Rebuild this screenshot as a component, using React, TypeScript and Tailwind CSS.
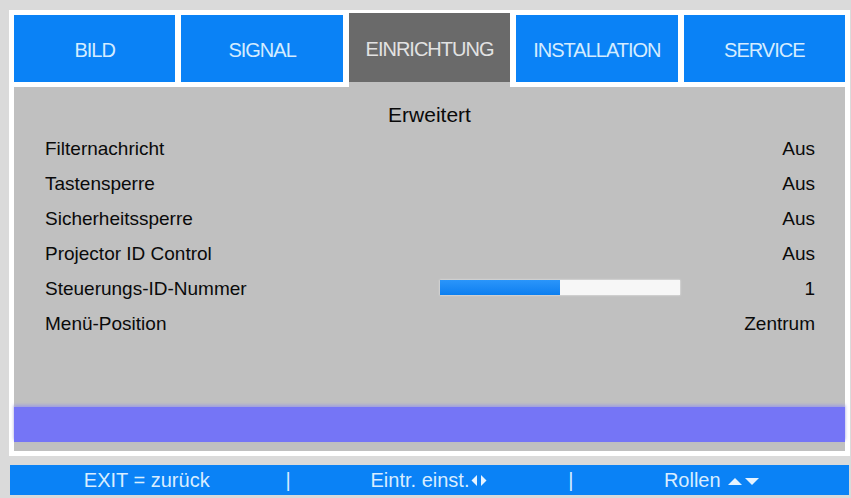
import React from "react";

const tabs = ["BILD", "SIGNAL", "EINRICHTUNG", "INSTALLATION", "SERVICE"];
const activeTab = 2;

const rows: { label: string; value: string; slider?: number }[] = [
  { label: "Filternachricht", value: "Aus" },
  { label: "Tastensperre", value: "Aus" },
  { label: "Sicherheitssperre", value: "Aus" },
  { label: "Projector ID Control", value: "Aus" },
  { label: "Steuerungs-ID-Nummer", value: "1", slider: 50 },
  { label: "Menü-Position", value: "Zentrum" },
];

const Tab: React.FC<{ title: string; active: boolean }> = ({ title, active }) => {
  return <div className="flex flex-col">
    <div
      className={`flex items-center justify-center pt-[3px] text-[20px] tracking-[-1px] ${active ? "bg-[#6a6a6a] text-[#e2e2e2] -mt-[2px] h-[69px]" : "h-[67px] bg-[#0a82f6] text-[#d4ecff]"}`}
    >
      {title}
    </div>
    <div className={`h-[5px] ${active ? "bg-[#c0c0c0]" : "bg-white"}`} />
  </div>
}

const Slider: React.FC<{ percent: number }> = ({ percent }) => {
  return <div className="h-[15px] w-[240px] -mt-[5px] bg-[#f7f7f7] shadow-[0_0_2px_#f0f0f0]">
    <div className="h-full bg-gradient-to-b from-[#2a95fa] to-[#0a7ff0]" style={{ width: `${percent}%` }} />
  </div>
}

const Row: React.FC<{ label: string; value: string; slider?: number }> = ({ label, value, slider }) => {
  return <div className="h-[35px] grid grid-cols-[395px_240px_1fr] items-center">
    <span>{label}</span>
    <div className="flex items-center">{slider !== undefined && <Slider percent={slider} />}</div>
    <span className="text-right">{value}</span>
  </div>
}

const LeftRight = () => (
  <svg width="18" height="13" viewBox="0 0 18 13" className="inline-block ml-[1px] mb-[2px]">
    <polygon points="7,1 7,12 1.5,6.5" fill="#e6f3ff" />
    <polygon points="11,1 11,12 16.5,6.5" fill="#e6f3ff" />
  </svg>
);

const UpDown = () => (
  <svg width="34" height="12" viewBox="0 0 34 12" className="inline-block ml-[6px] mb-[2px]">
    <polygon points="1,10 15,10 8,3" fill="#e6f3ff" />
    <polygon points="18,3 32,3 25,10" fill="#e6f3ff" />
  </svg>
);

export default function App() {
  return <div
    className="w-[851px] h-[498px] bg-[#dadada] pt-[10px] pl-[9px] overflow-hidden"
    style={{ fontFamily: '"Liberation Sans", Arial, sans-serif' }}
  >
    <div className="w-[841px] border-[5px] border-white bg-white">
      <div className="grid grid-cols-5 gap-x-[6px]">
        {tabs.map((t, i) => <Tab key={t} title={t} active={i === activeTab} />)}
      </div>

      <div className="h-[364px] bg-[#c0c0c0] flex flex-col pt-[10px] text-[19px] text-[#0a0a0a]">
        <div className="h-[35px] flex items-center justify-center text-[21px]">Erweitert</div>
        <div className="pl-[31px] pr-[30px]">
          {rows.map((r) => <Row key={r.label} {...r} />)}
        </div>
        <div className="flex-1" />
        <div className="h-[35px] bg-[#7575f6] mb-[9px] shadow-[0_-2px_3px_#9d9de0]" />
      </div>
    </div>

    <div className="mt-[9px] ml-[1px] w-[839px] h-[30px] bg-[#0a82f6] text-[#d8edff] text-[20px] grid grid-cols-[1fr_auto_1fr_auto_1fr] items-center">
      <span className="text-center">EXIT = zurück</span>
      <span className="px-[2px]">|</span>
      <span className="text-center">Eintr. einst.<LeftRight /></span>
      <span className="px-[2px]">|</span>
      <span className="text-center">Rollen<UpDown /></span>
    </div>
  </div>
}
